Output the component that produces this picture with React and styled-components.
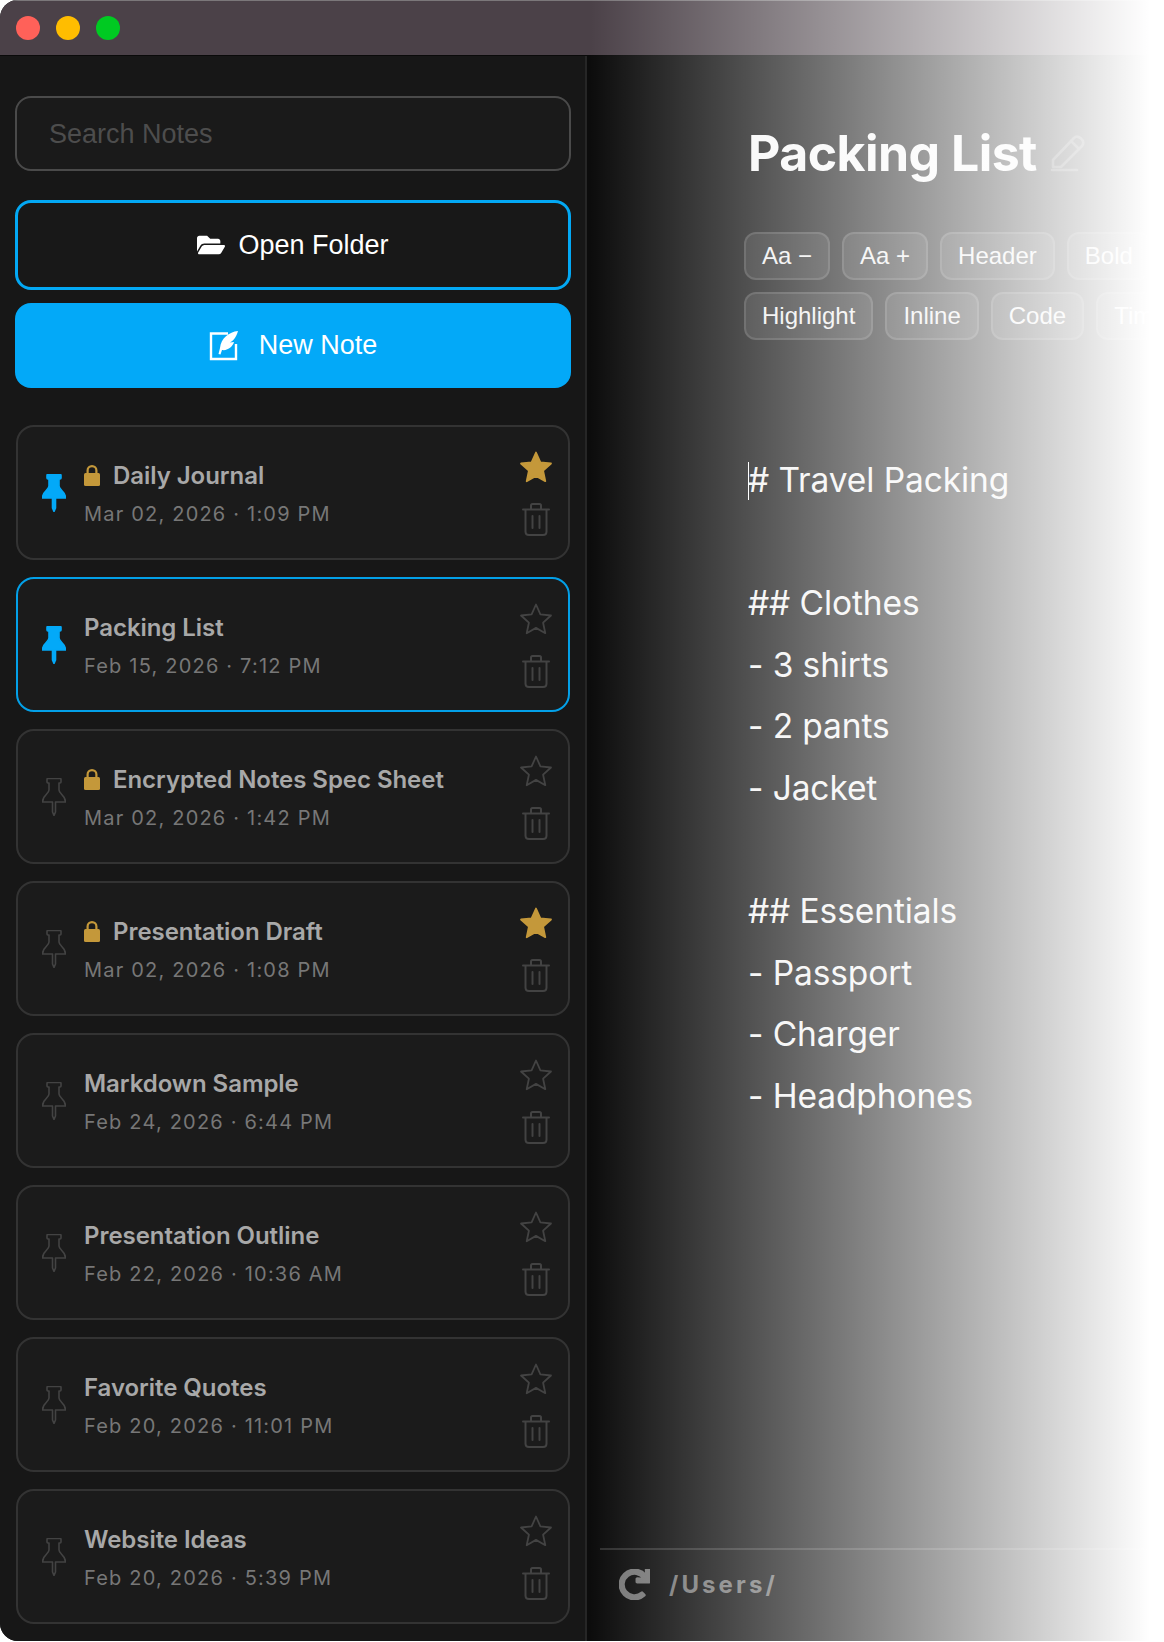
import styled, { createGlobalStyle } from "styled-components";
import { FaFolderOpen, FaRedo } from "react-icons/fa";

const GlobalStyle = createGlobalStyle`
  html, body {
    margin: 0;
    height: 100%;
    background: #fff;
    overflow: hidden;
  }
  * {
    box-sizing: border-box;
  }
`;

const Window = styled.div`
  position: relative;
  width: 1164px;
  height: 1641px;
  display: flex;
  flex-direction: column;
  overflow: hidden;
  border-radius: 18px 0 0 18px;
  background: #171717;
  font-family: Inter, "Liberation Sans", sans-serif;
`;

// the window fades out to white towards its right edge
const FadeOut = styled.div`
  position: absolute;
  inset: 0;
  pointer-events: none;
  background: linear-gradient(to right, rgba(255, 255, 255, 0) 590px, rgba(255, 255, 255, 1) 1150px);
`;

const TitleBar = styled.div`
  height: 56px;
  flex: none;
  display: flex;
  align-items: center;
  gap: 16px;
  padding-left: 16px;
  background: #4b4148;
  border-top: 1px solid #7b777a;
  border-bottom: 1px solid #0a0a0a;
`;

const Light = styled.span`
  width: 24px;
  height: 24px;
  border-radius: 50%;
  background: ${(p) => p.$color};
`;

const Body = styled.div`
  flex: 1;
  min-height: 0;
  display: flex;
`;

const Sidebar = styled.aside`
  width: 587px;
  flex: none;
  padding: 40px 14px 0 15px;
  background: #171717;
  border-right: 2px solid #262626;
`;

const SearchBox = styled.div`
  height: 75px;
  display: flex;
  align-items: center;
  padding: 1px 0 0 32px;
  border: 2px solid #4a4a4a;
  border-radius: 16px;
  background: #1a1a1a;
  color: #4d4d4d;
  font-family: "Liberation Sans", sans-serif;
  font-size: 27px;
`;

const OpenButton = styled.div`
  height: 90px;
  margin-top: 29px;
  display: flex;
  align-items: center;
  justify-content: center;
  gap: 13px;
  border: 3px solid #03a8f4;
  border-radius: 16px;
  background: #181818;
  color: #fff;
  font-family: "Liberation Sans", sans-serif;
  font-size: 27px;
`;

const NewButton = styled(OpenButton)`
  height: 85px;
  margin-top: 13px;
  gap: 20px;
  border: none;
  background: #03a9f8;
`;

const NoteList = styled.div`
  margin-top: 37px;
  padding: 0 1px;
  display: flex;
  flex-direction: column;
  gap: 17px;
`;

const Card = styled.div`
  height: 135px;
  display: flex;
  align-items: center;
  padding: 0 14px 0 24px;
  border: 2px solid ${(p) => (p.$active ? "#03a0e8" : "#333333")};
  border-radius: 18px;
  background: #1b1b1b;
`;

const Info = styled.div`
  flex: 1;
  min-width: 0;
  margin-left: 18px;
  display: flex;
  flex-direction: column;
  gap: 13px;
  padding-top: 2px;
`;

const TitleRow = styled.div`
  display: flex;
  align-items: center;
  gap: 13px;
  height: 28px;
`;

const NoteTitle = styled.span`
  color: #a8a8a8;
  font-size: 24px;
  font-weight: 600;
  letter-spacing: -0.05px;
`;

const NoteDate = styled.span`
  color: #777777;
  font-size: 20px;
  letter-spacing: 1.2px;
`;

const Actions = styled.div`
  width: 36px;
  display: flex;
  flex-direction: column;
  align-items: center;
  gap: 19px;
`;

const Main = styled.main`
  flex: 1;
  min-width: 0;
  display: flex;
  flex-direction: column;
  background: #0c0c0c;
`;

const Editor = styled.div`
  flex: 1;
  padding: 65px 0 0 156px;
`;

const Heading = styled.div`
  display: flex;
  align-items: center;
  gap: 13px;
  height: 64px;
  padding-left: 5px;
  color: #f7f7f7;
  font-size: 50px;
  font-weight: 700;
  letter-spacing: -0.55px;
`;

const Toolbar = styled.div`
  margin: 47px 0 0 1px;
  display: flex;
  flex-direction: column;
  gap: 12px;
`;

const ToolRow = styled.div`
  display: flex;
  gap: 12px;
`;

const Chip = styled.div`
  height: 48px;
  flex: none;
  display: flex;
  align-items: center;
  padding: 0 16px;
  border: 2px solid rgba(255, 255, 255, 0.12);
  border-radius: 12px;
  background: rgba(255, 255, 255, 0.09);
  color: #eeeeee;
  font-family: "Liberation Sans", sans-serif;
  font-size: 24px;
`;

const TextArea = styled.div`
  position: relative;
  margin-top: 110px;
  padding-left: 5px;
  color: #f2f2f2;
  font-size: 33.5px;
  letter-spacing: -0.1px;
  line-height: 61.6px;
`;

const Line = styled.div`
  height: 61.6px;
  white-space: pre;
`;

const Caret = styled.span`
  position: absolute;
  left: 5px;
  top: 12px;
  width: 1px;
  height: 38px;
  background: #ffffff;
`;

const Footer = styled.div`
  height: 93px;
  flex: none;
  margin-left: 13px;
  display: flex;
  align-items: center;
  gap: 19px;
  padding: 0 0 22px 19px;
  border-top: 2px solid #2f2f2f;
  color: #777777;
  font-size: 24px;
  font-weight: 700;
  letter-spacing: 3.1px;
`;

const notes = [
  { title: "Daily Journal", date: "Mar 02, 2026 · 1:09 PM", pinned: true, locked: true, starred: true },
  { title: "Packing List", date: "Feb 15, 2026 · 7:12 PM", pinned: true, active: true },
  { title: "Encrypted Notes Spec Sheet", date: "Mar 02, 2026 · 1:42 PM", locked: true },
  { title: "Presentation Draft", date: "Mar 02, 2026 · 1:08 PM", locked: true, starred: true },
  { title: "Markdown Sample", date: "Feb 24, 2026 · 6:44 PM" },
  { title: "Presentation Outline", date: "Feb 22, 2026 · 10:36 AM" },
  { title: "Favorite Quotes", date: "Feb 20, 2026 · 11:01 PM" },
  { title: "Website Ideas", date: "Feb 20, 2026 · 5:39 PM" },
];

const toolRows = [
  ["Aa −", "Aa +", "Header", "Bold"],
  ["Highlight", "Inline", "Code", "Tim"],
];

const lines = [
  "# Travel Packing",
  "",
  "## Clothes",
  "- 3 shirts",
  "- 2 pants",
  "- Jacket",
  "",
  "## Essentials",
  "- Passport",
  "- Charger",
  "- Headphones",
];

const PinIcon = ({ on }) => (
  <svg width="24" height="38" viewBox="0 0 24 38" style={{ flex: "none" }}>
    <path
      d="M5 1.5Q5 .5 6 .5H18Q19 .5 19 1.5V4Q19 5 18 5H17V12C17 16 23.5 17 23.5 24H13.5V34L12 37.5L10.5 34V24H.5C.5 17 7 16 7 12V5H6Q5 5 5 4Z"
      fill={on ? "#03a9f8" : "none"}
      stroke={on ? "#03a9f8" : "#434343"}
      strokeWidth="1.6"
      strokeLinejoin="round"
    />
  </svg>
);

const LockIcon = () => (
  <svg width="16" height="22" viewBox="0 0 16 22" style={{ flex: "none" }}>
    <path d="M3.6 10V6.5a4.4 4.4 0 0 1 8.8 0V10" fill="none" stroke="#c4983a" strokeWidth="2.2" />
    <rect x="0" y="9" width="16" height="13" rx="1.5" fill="#c4983a" />
  </svg>
);

const StarIcon = ({ on }) => (
  <svg width="34" height="34" viewBox="0 0 34 34">
    <path
      d="M17 2.5L21.4 12.4L32 13.5L24.1 20.7L26.3 31.2L17 25.9L7.7 31.2L9.9 20.7L2 13.5L12.6 12.4Z"
      fill={on ? "#c4983a" : "none"}
      stroke={on ? "#c4983a" : "#434343"}
      strokeWidth="1.8"
      strokeLinejoin="round"
    />
  </svg>
);

const TrashIcon = () => (
  <svg width="28" height="33" viewBox="0 0 28 33" fill="none" stroke="#434343" strokeWidth="2" strokeLinecap="round">
    <path d="M1 6.5H27" />
    <path d="M9 6V2.5Q9 1 10.5 1H17.5Q19 1 19 2.5V6" />
    <path d="M3.5 7V28.5Q3.5 32 7 32H21Q24.5 32 24.5 28.5V7" />
    <path d="M10.5 13V25" />
    <path d="M17.5 13V25" />
  </svg>
);

const QuillNoteIcon = () => (
  <svg width="30" height="30" viewBox="0 0 30 30">
    <path d="M19 2.5H2V28H27V13" fill="none" stroke="#fff" strokeWidth="2.4" />
    <path d="M29 0C20 1 12 7 11 17C10.5 19 10 21 9.5 23L11.5 23.5L13 19C19 20 24 15 25 11L21 11.5C24 10 27 7 29 0Z" fill="#fff" />
  </svg>
);

const PencilIcon = () => (
  <svg width="36" height="38" viewBox="0 0 36 38" fill="none" stroke="#4a4a4a" strokeWidth="2.6" strokeLinejoin="round" strokeLinecap="round">
    <path d="M3 26L24 4Q27 1 31 4.5T32 12L11 33H3Z" />
    <path d="M21 7L29 15" />
    <path d="M2 36H27" />
  </svg>
);

const App = () => (
  <>
    <GlobalStyle />
    <Window>
      <TitleBar>
        <Light $color="#ff6159" />
        <Light $color="#ffbd00" />
        <Light $color="#00ca22" />
      </TitleBar>
      <Body>
        <Sidebar>
          <SearchBox>Search Notes</SearchBox>
          <OpenButton>
            <FaFolderOpen size={28} />
            Open Folder
          </OpenButton>
          <NewButton>
            <QuillNoteIcon />
            New Note
          </NewButton>
          <NoteList>
            {notes.map((note) => (
              <Card key={note.title} $active={note.active}>
                <PinIcon on={note.pinned} />
                <Info>
                  <TitleRow>
                    {note.locked && <LockIcon />}
                    <NoteTitle>{note.title}</NoteTitle>
                  </TitleRow>
                  <NoteDate>{note.date}</NoteDate>
                </Info>
                <Actions>
                  <StarIcon on={note.starred} />
                  <TrashIcon />
                </Actions>
              </Card>
            ))}
          </NoteList>
        </Sidebar>
        <Main>
          <Editor>
            <Heading>
              Packing List
              <PencilIcon />
            </Heading>
            <Toolbar>
              {toolRows.map((row) => (
                <ToolRow key={row[0]}>
                  {row.map((label) => (
                    <Chip key={label}>{label}</Chip>
                  ))}
                </ToolRow>
              ))}
            </Toolbar>
            <TextArea>
              <Caret />
              {lines.map((line, i) => (
                <Line key={i}>{line}</Line>
              ))}
            </TextArea>
          </Editor>
          <Footer>
            <FaRedo size={31} stroke="currentColor" strokeWidth={30} />
            /Users/
          </Footer>
        </Main>
      </Body>
      <FadeOut />
    </Window>
  </>
);

export default App;
